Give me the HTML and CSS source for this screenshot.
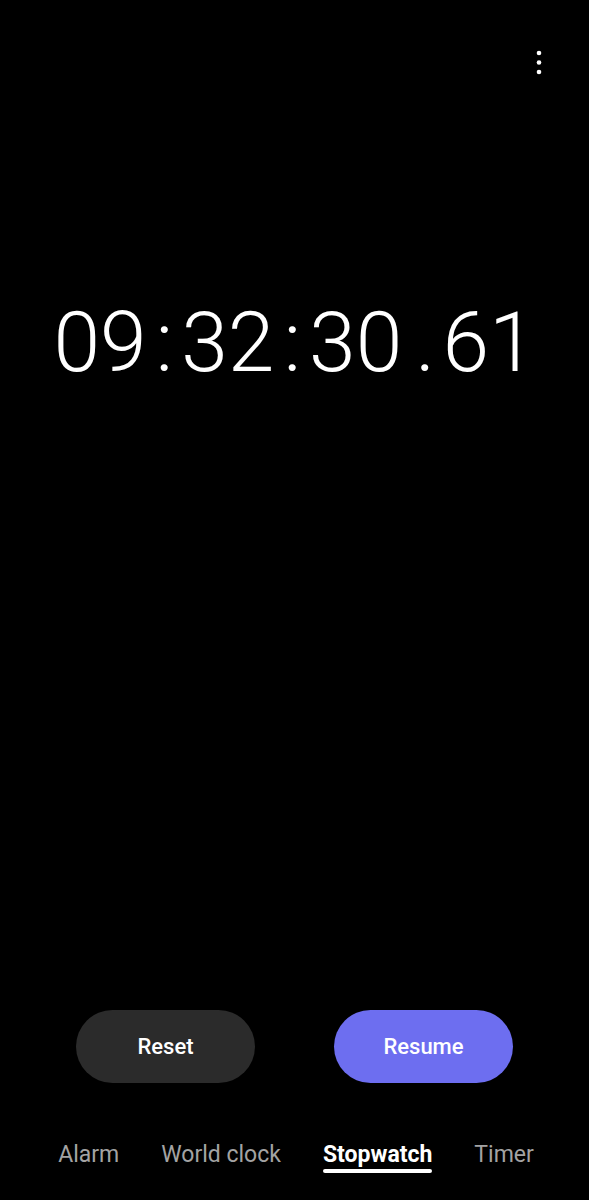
FILE: index.html
```html
<!DOCTYPE html>
<html lang="en">
<head>
  <meta charset="UTF-8" />
  <meta name="viewport" content="width=device-width, initial-scale=1.0"/>
  <title>Stopwatch</title>
  <link rel="stylesheet" href="styles.css">
</head>
<body>
  <div class="app">
    <div class="topbar">
      <button class="menu" aria-label="More options">
        <svg width="24" height="30" viewBox="0 0 24 30">
          <circle cx="12" cy="6" r="2.3" fill="#fff"/>
          <circle cx="12" cy="15.5" r="2.3" fill="#fff"/>
          <circle cx="12" cy="25" r="2.3" fill="#fff"/>
        </svg>
      </button>
    </div>

    <div class="time" id="time">
      <span class="digits">09</span><span class="sep colon">:</span><span class="digits">32</span><span class="sep colon">:</span><span class="digits">30</span><span class="sep dot">.</span><span class="digits">61</span>
    </div>

    <div class="controls">
      <button class="pill reset">Reset</button>
      <button class="pill resume">Resume</button>
    </div>

    <nav class="tabs">
      <span class="tab">Alarm</span>
      <span class="tab">World clock</span>
      <span class="tab active">Stopwatch</span>
      <span class="tab">Timer</span>
    </nav>
  </div>
</body>
</html>
```

FILE: styles.css
```css
* {
  box-sizing: border-box;
}

body, html {
  margin: 0;
  padding: 0;
  background: #000;
  font-family: Roboto, "Liberation Sans", sans-serif;
  color: #fff;
}

.app {
  height: 1200px;
  display: flex;
  flex-direction: column;
}

.topbar {
  display: flex;
  justify-content: flex-end;
  padding: 47px 38px 0 0;
}

.menu {
  background: none;
  border: none;
  padding: 0;
  width: 24px;
  height: 30px;
  display: block;
}

.menu svg {
  display: block;
}

.time {
  margin-top: 224px;
  display: flex;
  justify-content: center;
  font-size: 84px;
  font-weight: 300;
  line-height: 1;
}

.sep {
  margin: 0 8px 0 9px;
}

.dot {
  margin: 0 7px 0 13px;
}

.controls {
  margin-top: auto;
  display: flex;
  justify-content: center;
  gap: 79px;
}

.pill {
  width: 179px;
  height: 73px;
  border: none;
  border-radius: 37px;
  font-family: Roboto, "Liberation Sans", sans-serif;
  font-size: 22px;
  font-weight: 500;
  color: #fff;
  cursor: pointer;
}

.reset {
  background: #2b2b2b;
}

.resume {
  background: #6d6ef0;
}

.tabs {
  margin-top: 58px;
  margin-bottom: 27px;
  display: flex;
  justify-content: center;
  gap: 42px;
  padding-left: 3px;
  font-size: 23px;
  line-height: 27px;
}

.tab {
  display: flex;
  flex-direction: column;
  color: #a3a3a3;
}

.tab::after {
  content: "";
  height: 4px;
  margin-top: 1px;
  border-radius: 2px;
}

.tab.active {
  color: #fff;
  font-weight: 700;
}

.tab.active::after {
  background: #fff;
}
```
